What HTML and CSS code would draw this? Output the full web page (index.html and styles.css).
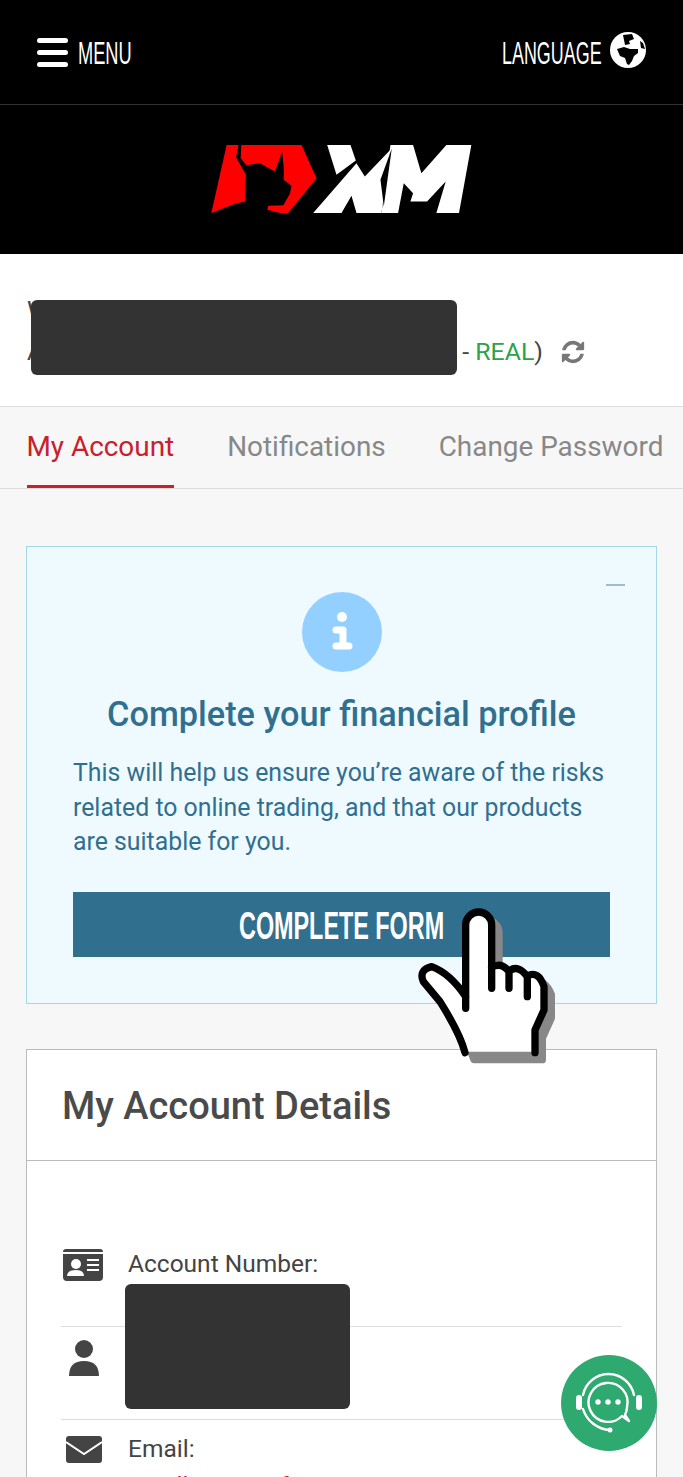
FILE: index.html
```html
<!DOCTYPE html>
<html>
    <head>
        <meta charset="utf-8">
        <title>My Account</title>
        <link rel="stylesheet" href="styles.css">
    </head>
    <body>
        <div class="topbar">
            <a class="menu">
                <span class="bars"><i></i><i></i><i></i></span>
                <span class="narrow menu-text">MENU</span>
            </a>
            <a class="lang">
                <span class="narrow lang-text">LANGUAGE</span>
                <svg class="globe" viewBox="0 0 36 36">
                    <circle cx="18" cy="18" r="18" fill="#fff"/>
                    <path d="M13 3 L22 2 L24 7 L19 9 L20 12 L15 13 L14 8 Z" fill="#000"/>
                    <path d="M7 17 L14 15 L20 17 L28 17 L28 21 L24 24 L22 29 L19 33 L17 32 L15 26 L10 24 Z" fill="#000"/>
                    <path d="M30 9 L33 11 L35 17 L31 16 Z" fill="#000"/>
                </svg>
            </a>
        </div>
        <div class="logobar">
            <svg class="logo" viewBox="90 40 790 215">
                <polygon points="140,45 365,45 410,145 325,250 94,250" fill="#f00"/>
                <path d="M184,45 L182,85 L200,106 L240,100 L285,125 L307,65 L312,120 L311,150 L335,168 L330,192 L310,226 L265,228 L262,240 L300,250 L94,250 L165,222 L195,215 L198,135 L168,82 L176,45 Z" fill="#000"/>
                <polygon points="442,45 512,45 528,92 470,135" fill="#fff"/>
                <polygon points="400,250 485,250 515,198 530,250 605,250 632,60 555,140 530,100" fill="#fff"/>
                <polygon points="632,45 700,45 725,130 800,45 875,45 838,250 770,250 798,155 742,215 692,215 700,190 672,160 655,250 605,250" fill="#fff"/>
                <polygon points="636,56 612,230 602,150" fill="#000"/>
            </svg>
        </div>
        <div class="account">
            <div class="account-line">W</div>
            <div class="account-line">A<span class="account-rest"> - <span class="real">REAL</span>)</span>
                <svg class="refresh" viewBox="0 0 1792 1792"><path fill="#777" d="M1639 1056q0 5-1 7-64 268-268 434.500t-478 166.500q-146 0-282.500-55t-243.500-157l-129 129q-19 19-45 19t-45-19-19-45v-448q0-26 19-45t45-19h448q26 0 45 19t19 45-19 45l-137 137q71 66 161 102t187 36q134 0 250-65t186-179q11-17 53-117 8-23 30-23h192q13 0 22.500 9.500t9.500 22.500zm25-800v448q0 26-19 45t-45 19h-448q-26 0-45-19t-19-45 19-45l138-138q-148-137-349-137-134 0-250 65t-186 179q-11 17-53 117-8 23-30 23h-199q-13 0-22.500-9.500t-9.500-22.500v-7q65-268 270-434.500t480-166.500q146 0 284 55.500t245 156.500l130-129q19-19 45-19t45 19 19 45z"/></svg>
            </div>
            <div class="redact redact-name"></div>
        </div>
        <ul class="tabs">
            <li class="active">My Account</li>
            <li>Notifications</li>
            <li>Change Password</li>
        </ul>
        <div class="content">
            <div class="notice">
                <span class="collapse"></span>
                <svg class="info" viewBox="0 0 80 80">
                    <circle cx="40" cy="40" r="40" fill="#94d0ff"/>
                    <circle cx="40" cy="25" r="5" fill="#fff"/>
                    <path d="M34 38 H41 V54 M34 54 H47" fill="none" stroke="#fff" stroke-width="7" stroke-linecap="round" stroke-linejoin="round"/>
                </svg>
                <h2>Complete your financial profile</h2>
                <p>This will help us ensure you’re aware of the risks related to online trading, and that our products are suitable for you.</p>
                <div class="btn"><span class="narrow btn-text">COMPLETE FORM</span></div>
            </div>
            <div class="card">
                <h3>My Account Details</h3>
                <div class="rows">
                    <div class="row">
                        <svg class="row-icon" viewBox="0 0 40 32">
                            <path d="M3 0 H37 Q40 0 40 3 H0 Q0 0 3 0 Z M0 5 H40 V28 Q40 32 36 32 H4 Q0 32 0 28 Z" fill="#444"/>
                            <circle cx="13" cy="15" r="5" fill="#fff"/>
                            <path d="M4 27 Q4 21 13 21 Q21 21 21 27 Z" fill="#fff"/>
                            <path d="M24 11 H36 M24 16 H36 M24 21 H36" stroke="#fff" stroke-width="2.200"/>
                        </svg>
                        <div class="row-text">Account Number:</div>
                    </div>
                    <div class="row row-user">
                        <svg class="row-icon user-icon" viewBox="0 0 32 36">
                            <ellipse cx="16" cy="9" rx="9" ry="9" fill="#444"/>
                            <path d="M1 36 Q1 21 16 21 Q31 21 31 36 Z" fill="#444"/>
                        </svg>
                    </div>
                    <div class="row">
                        <svg class="row-icon mail-icon" viewBox="0 0 36 27">
                            <rect width="36" height="27" rx="3" fill="#444"/>
                            <path d="M0 6 L18 18 L36 6" fill="none" stroke="#fff" stroke-width="2"/>
                        </svg>
                        <div class="row-text">Email:<div class="email">ontellit@mmsfx.com</div></div>
                    </div>
                </div>
            </div>
            <div class="redact redact-number"></div>
        </div>
        <svg class="hand" viewBox="0 0 540 570">
            <path d="M197 355 V105 A39 39 0 0 1 275 105 V225 Q305 215 325 240 Q355 225 382 255 Q415 245 432 290 V360 L405 420 V485 H200 Q180 430 120 335 L70 275 Q55 240 95 230 Q150 250 197 320 Z" fill="#888" stroke="#888" stroke-width="22" stroke-linejoin="round" transform="translate(22 24)"/>
            <path d="M197 355 V105 A39 39 0 0 1 275 105 V225 Q305 215 325 240 Q355 225 382 255 Q415 245 432 290 V360 L405 420 V485 H195 Q180 430 120 335 L70 275 Q55 240 95 230 Q150 250 197 320 Z" fill="#fff"/>
            <path d="M197 355 V105 A39 39 0 0 1 275 105 V295 M275 232 Q305 215 327 245 V295 M327 243 Q355 222 382 260 V320 M382 258 Q415 240 432 290 V360 L405 420 V488 M195 488 Q180 430 120 335 L70 275 Q55 240 95 230 Q150 250 197 320" fill="none" stroke="#000" stroke-width="22" stroke-linecap="round" stroke-linejoin="round"/>
        </svg>
        <svg class="chat" viewBox="0 0 96 96">
            <circle cx="48" cy="48" r="48" fill="#2eaa70"/>
            <g fill="none" stroke="#fff" stroke-width="2.400" stroke-linecap="round" stroke-linejoin="round">
                <path d="M22 40 A26 26 0 0 1 73 40"/>
                <path d="M22 54 A30 30 0 0 0 49 75"/>
                <path d="M61 61 A19.500 19.500 0 1 1 66 52 C66 56 65 58 64 60 L68 66 Z"/>
            </g>
            <rect x="15" y="40" width="6" height="15" rx="3" fill="#fff"/>
            <rect x="75" y="40" width="6" height="15" rx="3" fill="#fff"/>
            <circle cx="49" cy="75" r="2.500" fill="#fff"/>
            <circle cx="37" cy="47" r="2.700" fill="#fff"/>
            <circle cx="47" cy="47" r="2.700" fill="#fff"/>
            <circle cx="57" cy="47" r="2.700" fill="#fff"/>
        </svg>
    </body>
</html>
```

FILE: styles.css
```css
html, body {
    margin: 0;
    height: 1477px;
    overflow: hidden;
}
body {
    position: relative;
    background: #f7f7f7;
    font-family: Roboto, sans-serif;
    color: #444;
}
.narrow {
    display: block;
    font-family: "Liberation Sans Narrow", "Liberation Sans", sans-serif;
    white-space: nowrap;
    transform-origin: left center;
}

.topbar {
    display: flex;
    justify-content: space-between;
    align-items: center;
    height: 105px;
    padding: 0 37px;
    box-sizing: border-box;
    background: #000;
    border-bottom: 1px solid #333;
    color: #fff;
}
.menu, .lang {
    display: flex;
    align-items: center;
}
.bars {
    display: flex;
    flex-direction: column;
    gap: 7px;
    width: 31px;
}
.bars i {
    height: 5px;
    border-radius: 3px;
    background: #fff;
}
.menu-text {
    width: 53px;
    margin-left: 10px;
    margin-top: 3px;
    font-size: 32px;
    transform: scaleX(.57);
}
.lang {
    margin-top: -5px;
}
.lang-text {
    width: 97px;
    margin-top: 7px;
    font-size: 32px;
    transform: scaleX(.56);
}
.globe {
    width: 36px;
    height: 36px;
    margin-left: 11px;
}

.logobar {
    display: flex;
    justify-content: center;
    height: 149px;
    background: #000;
}
.logo {
    width: 263px;
    height: 72px;
    margin-top: 38px;
    margin-left: -1px;
}

.account {
    position: relative;
    height: 153px;
    padding: 35px 0 0 27px;
    box-sizing: border-box;
    background: #fff;
    border-bottom: 1px solid #ddd;
    font-size: 24.800px;
    line-height: 42px;
}
.account-line {
    display: flex;
    align-items: center;
    height: 42px;
}
.account-rest {
    margin-left: 413px;
    white-space: pre;
}
.real {
    color: #2ba24c;
}
.refresh {
    width: 26px;
    height: 26px;
    margin-left: 17px;
}
.redact {
    position: absolute;
    background: #333;
    border-radius: 6px;
}
.redact-name {
    left: 31px;
    top: 46px;
    width: 426px;
    height: 75px;
}

.tabs {
    display: flex;
    gap: 53px;
    height: 82px;
    margin: 0;
    padding: 0 0 0 26.500px;
    box-sizing: border-box;
    list-style: none;
    border-bottom: 1px solid #ddd;
    font-size: 27.900px;
    line-height: 80px;
    color: #888;
    white-space: nowrap;
}
.tabs .active {
    height: 81px;
    box-sizing: border-box;
    border-bottom: 3px solid #c9202a;
    color: #c9202a;
}

.content {
    padding: 57px 26px 0;
}
.notice {
    position: relative;
    height: 458px;
    padding: 45px 46px 0;
    box-sizing: border-box;
    background: #eefaff;
    border: 1px solid #a5d8e6;
    color: #316f8f;
}
.collapse {
    position: absolute;
    right: 31px;
    top: 37px;
    width: 19px;
    height: 2px;
    background: #9fbdcf;
}
.info {
    display: block;
    width: 80px;
    height: 80px;
    margin: 0 auto;
}
.notice h2 {
    margin: 22px 0 0;
    font-size: 34.300px;
    font-weight: 500;
    line-height: 40px;
    text-align: center;
    white-space: nowrap;
}
.notice p {
    margin: 22px 0 0;
    font-size: 24.850px;
    line-height: 34.500px;
}
.btn {
    display: flex;
    justify-content: center;
    height: 65px;
    margin-top: 32px;
    background: #316f8f;
    color: #fff;
    line-height: 68px;
}
.btn-text {
    width: 206px;
    font-size: 38px;
    font-weight: bold;
    transform: scaleX(.615);
}

.card {
    height: 500px;
    margin-top: 45px;
    background: #fff;
    border: 1px solid #bbb;
}
.card h3 {
    height: 111px;
    margin: 0;
    padding-left: 35px;
    box-sizing: border-box;
    border-bottom: 1px solid #bbb;
    font-size: 38px;
    font-weight: 500;
    line-height: 112px;
    color: #4a4a4a;
}
.rows {
    margin: 0 34px;
    padding-top: 79px;
}
.row {
    display: flex;
    height: 93px;
    box-sizing: border-box;
    border-bottom: 1px solid #ddd;
    padding-left: 2px;
}
.rows .row:first-child {
    height: 88px;
    margin-top: -1px;
}
.row-icon {
    flex: none;
    width: 40px;
    height: 32px;
    margin-top: 10px;
}
.user-icon {
    width: 32px;
    height: 36px;
    margin: 13px 0 0 5px;
}
.mail-icon {
    width: 36px;
    height: 27px;
    margin: 16px 0 0 3px;
}
.row-text {
    margin-top: 8px;
    margin-left: 25px;
    font-size: 24.500px;
    line-height: 34px;
}
.mail-icon + .row-text {
    margin-top: 12px;
    margin-left: 26px;
}
.email {
    margin-top: 3px;
    color: #c9202a;
}
.redact-number {
    left: 125px;
    top: 1284px;
    width: 225px;
    height: 125px;
}

.hand {
    position: absolute;
    left: 400px;
    top: 890px;
    width: 180px;
    height: 190px;
}
.chat {
    position: absolute;
    left: 561px;
    top: 1355px;
    width: 96px;
    height: 96px;
}
```
